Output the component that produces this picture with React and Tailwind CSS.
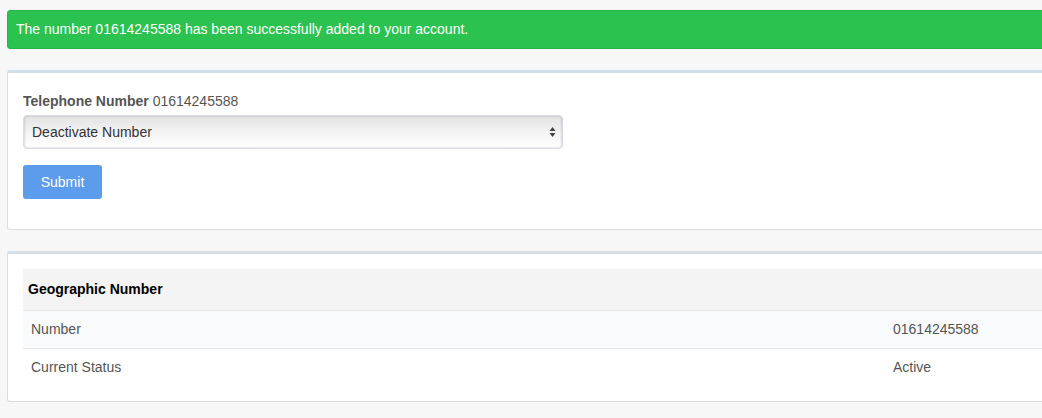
import React from "react"

const numberInfo = [
  { label: "Number", value: "01614245588" },
  { label: "Current Status", value: "Active" },
]

function Panel({ children, className = "" }) {
  return (
    <div
      className={`bg-white border border-[#d9dee3] border-t-[3px] border-t-[#d3dee6] rounded-[3px] ${className}`}
    >
      {children}
    </div>
  )
}

export default function App() {
  return (
    <div className="w-screen h-[418px] overflow-hidden bg-[#f7f7f7] font-['Liberation_Sans',Arial,sans-serif] text-[14px]">
      <div className="w-[1090px] pl-[7px] pt-[10px]">
        <div className="bg-[#2bc24f] border border-[#27b548] rounded-[3px] text-white h-[39px] flex items-center px-[8px]">
          The number 01614245588 has been successfully added to your account.
        </div>

        <Panel className="mt-[21px] h-[160px] px-[15px] pt-[19px]">
          <div className="text-[#555] leading-[18px]">
            <span className="font-bold">Telephone Number</span> 01614245588
          </div>
          <div className="mt-[5px] w-[540px] h-[34px] rounded-[4px] border border-[#d5dbe0] bg-gradient-to-b from-[#e3e3e3] via-[#f3f3f3] to-white shadow-[inset_1px_0_2px_rgba(0,0,0,0.12),inset_-1px_0_2px_rgba(0,0,0,0.12)] flex items-center justify-between pl-[8px] pr-[6px]">
            <span className="text-[#333]">Deactivate Number</span>
            <svg width="7" height="12" viewBox="0 0 7 12">
              <path d="M3.5 1 L6.5 5 L0.5 5 Z" fill="#444" />
              <path d="M3.5 11 L6.5 7 L0.5 7 Z" fill="#444" />
            </svg>
          </div>
          <button className="mt-[16px] w-[79px] h-[34px] bg-[#5d9cec] rounded-[3px] text-white">
            Submit
          </button>
        </Panel>

        <Panel className="mt-[21px] h-[151px] px-[15px] pt-[15px]">
          <table className="w-full border-collapse text-[#555]">
            <thead>
              <tr className="bg-[#f4f4f4] h-[41px]">
                <th colSpan={2} className="text-left text-black font-bold px-[5px]">
                  Geographic Number
                </th>
              </tr>
            </thead>
            <tbody>
              {numberInfo.map((row, i) => (
                <tr
                  key={row.label}
                  className={`h-[38px] border-t border-[#e6e6e6] ${i % 2 === 0 ? "bg-[#f9fafb]" : ""}`}
                >
                  <td className="w-[862px] px-[8px]">{row.label}</td>
                  <td className="px-[8px]">{row.value}</td>
                </tr>
              ))}
            </tbody>
          </table>
        </Panel>
      </div>
    </div>
  )
}
